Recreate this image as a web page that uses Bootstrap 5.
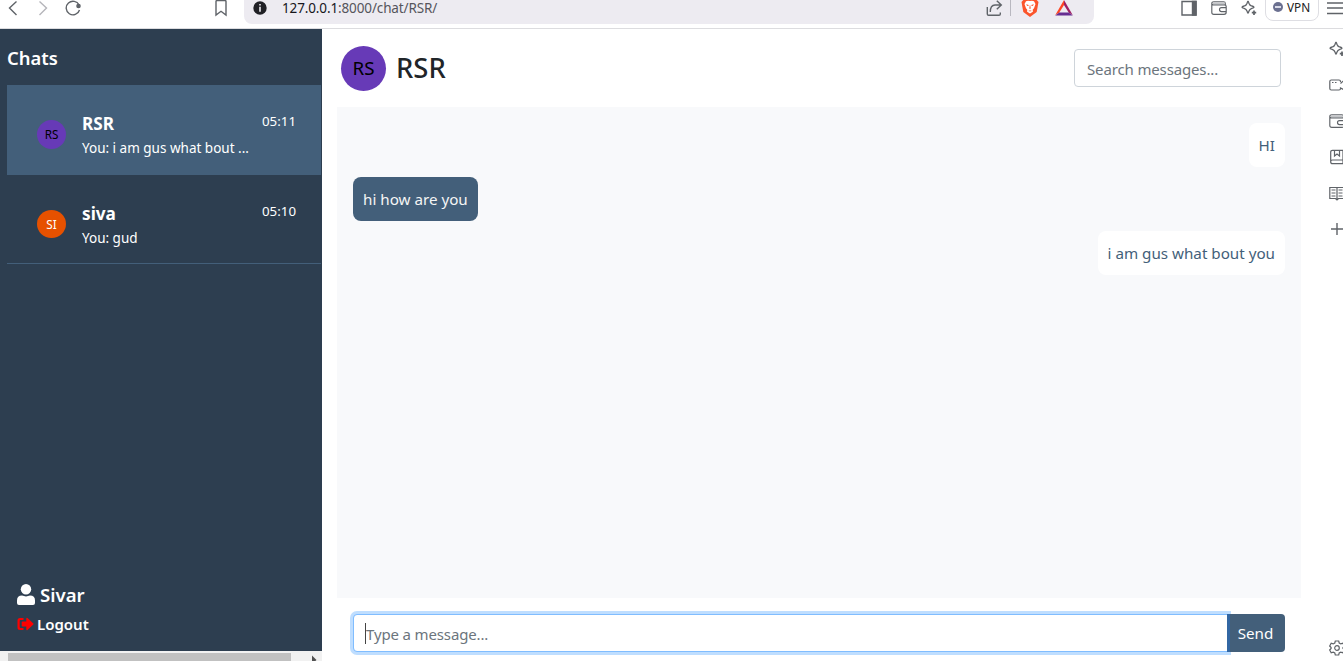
<!DOCTYPE html>
<html lang="en">
<head>
<meta charset="utf-8">
<meta name="viewport" content="width=device-width, initial-scale=1">
<title>Chat</title>
<link href="https://cdn.jsdelivr.net/npm/bootstrap@5.3.0/dist/css/bootstrap.min.css" rel="stylesheet">
<style>
  body { font-family: "Noto Sans", "Open Sans", sans-serif; font-size: 15.2px; line-height: 24px; height: 661px; overflow: hidden; color: #212529; }
  svg { display: block; flex: none; fill: none; stroke: #5f6368; stroke-width: 1.4; }
  .toolbar { height: 29px; border-bottom: 1px solid #dcdcdf; overflow: hidden; }
  .toolbar > svg, .address > svg { margin-top: -2px; }
  .address { width: 850px; height: 24px; background: #edebf1; border-radius: 0 0 8px 8px; margin-left: 15px; }
  .url { font-size: 13.5px; line-height: 18px; margin: -1px 0 0 15px; color: #55555c; width: 690px; letter-spacing: -.13px; }
  .url b { font-weight: 400; color: #17171c; }
  .divider { width: 1px; height: 16px; background: #b9b8c0; margin: 0 10px 0 6px; }
  .vpn { width: 54px; height: 32px; margin: -11px 0 0 8px; padding-top: 4px; border: 1px solid #dedee3; border-radius: 8px; font-size: 11.8px; color: #222; }
  .vpn i { width: 10px; height: 10px; border-radius: 50%; background: #6b7090; margin: 0 4px 0 7px; }
  .vpn i::before { content: ""; display: block; width: 6px; height: 2px; background: #d9dbe8; margin: 4px 2px; }
  .side { width: 322px; background: #2d3e50; color: #fff; }
  .side h1 { font-size: 18.4px; font-weight: 600; line-height: 24px; margin: 17px 0 15px 7px; }
  .chat-item { height: 90px; margin: 0 1px 0 7px; padding: 27px 25px 0 30px; font-size: 13.3px; border-bottom: 1px solid #435f7a; }
  .chat-item.current { background: #435f7a; }
  .chat-item + .chat-item { height: 89px; }
  .chat-item .name { font-size: 17.2px; font-weight: 700; line-height: 24px; }
  .chat-item .preview { font-size: 13.5px; line-height: 20px; margin-top: 2px; }
  .chat-item .time { line-height: 20px; margin-top: -1px; }
  .face { border-radius: 50%; background: #673ab7; color: #000; flex: none; }
  .face-sm { width: 29px; height: 29px; font-size: 11.7px; line-height: 20px; padding-bottom: 1px; margin: 8px 16px 0 0; }
  .face-lg { width: 45px; height: 45px; font-size: 18.8px; }
  .face.orange { background: #e65100; color: #fff; height: 28px; }
  .me { padding: 0 0 13px 17px; }
  .me .who { font-size: 18.6px; font-weight: 600; line-height: 30px; gap: 5px; }
  .me .who svg { margin-top: -2px; }
  .me .out { font-size: 15px; font-weight: 600; line-height: 28px; gap: 3px; }
  .scroller { width: 322px; height: 10px; background: #f1f1f1; }
  .scroller span { width: 283px; height: 8px; background: #c1c1c1; margin: 2px 0 0 8px; }
  .talk { width: 964px; margin-left: 15px; }
  .talk-head { height: 78px; padding: 0 20px 0 4px; }
  .talk-head h2 { font-size: 27.4px; font-weight: 550; color: #212529; line-height: 34px; margin: 0 0 1px 10px; }
  .form-control { font-size: 15px; height: 38px; padding: 7px 12px 5px; color: #495057; border-color: #ced4da; border-radius: 4px; letter-spacing: -.14px; }
  .form-control::placeholder { color: #6c757d; opacity: 1; }
  .search { width: 207px; }
  .messages { height: 491px; background: #f8f9fb; padding: 16px; gap: 10px; }
  .bubble { padding: 10px; border-radius: 8px; background: #fff; color: #435f7a; white-space: nowrap; }
  .bubble.theirs { background: #435f7a; color: #f5f5f5; }
  .composer { padding: 16px 16px 0; }
  .composer .form-control { border-color: #80bdff; box-shadow: 0 0 0 3px #bfdeff; border-radius: 4px 0 0 4px; }
  .caret { position: absolute; left: 13px; top: 9px; width: 1px; height: 21px; background: #444; z-index: 6; }
  .send { width: 58px; height: 38px; background: #435f7a; color: #fff; border: 0; border-left: 3px solid #3267a3; border-radius: 0 4px 4px 0; font-size: 15.2px; padding: 0 4px 0 0; position: relative; z-index: 6; }
  .rail { width: 14px; overflow: hidden; padding-top: 12px; gap: 20px; }
</style>
</head>
<body class="d-flex flex-column bg-white">
<svg width="0" height="0" class="position-absolute" aria-hidden="true">
  <symbol id="sparkle" viewBox="0 0 16 16"><path d="M7 1.200Q7.500 1.200 7.900 3.200Q8.600 5.300 10.800 6Q13 6.600 13 7.200Q13 7.800 10.800 8.400Q8.600 9.100 7.900 11.200Q7.500 13.200 7 13.200Q6.500 13.200 6.100 11.200Q5.400 9.100 3.200 8.400Q1 7.800 1 7.200Q1 6.600 3.200 6Q5.400 5.300 6.100 3.200Q6.500 1.200 7 1.200Z" stroke-width="1.300"/><path d="M13 10.500v4.400M10.800 12.700h4.400" stroke-width="1.700"/></symbol>
  <symbol id="wallet" viewBox="0 0 16 16"><path d="M14.300 4.800V3.400Q14.300 1.700 12.600 1.700H2.800Q.8 1.700 .8 3.500V12.500Q.8 14.300 2.800 14.300H13Q15.200 14.300 15.200 12.300V6.600Q15.200 4.800 13.400 4.800H2.500Q.8 4.800 .8 3.500M15 7.600H10.500a2 2 0 0 0 0 4H15" stroke-width="1.150"/><path d="M2 2.300h11.700v2H2z" fill="#c3c5c8" stroke="none"/></symbol>
</svg>

<header class="toolbar d-flex align-items-start flex-shrink-0">
  <svg width="16" height="20" viewBox="0 0 16 20" class="ms-1"><path d="M12.500 3.500L5.500 10l7 7"/></svg>
  <svg width="16" height="20" viewBox="0 0 16 20" style="margin-left:15px;stroke:#b5b5ba"><path d="M4.500 3.500l7 6.500-7 7"/></svg>
  <svg width="18" height="20" viewBox="0 0 18 20" style="margin-left:13px"><path d="M15.100 7A6.800 6.800 0 1 0 15.500 12"/><circle cx="14.500" cy="8" r="1.600" fill="#5f6368"/></svg>
  <svg width="16" height="20" viewBox="0 0 16 20" style="margin-left:131px"><path d="M3 17V3.500Q3 2.500 4 2.500h8q1 0 1 1V17l-5-3.700z"/></svg>
  <div class="address d-flex align-items-start">
    <svg width="14" height="20" viewBox="0 0 14 20" style="margin-left:9px;stroke:none"><circle cx="7" cy="10" r="6.700" fill="#202025"/><path d="M6.200 6h1.600v1.600H6.200zM6.200 8.800h1.600v5H6.200z" fill="#edebf1"/></svg>
    <span class="url"><b>127.0.0.1</b>:8000/chat/RSR/</span>
    <svg width="20" height="20" viewBox="0 0 20 20" style="margin-left:12px"><path d="M3.300 9V16Q3.300 17.300 4.600 17.300H15Q16.300 17.300 16.300 16V14.500M6.300 14Q6.300 7 11 7H17M12.800 2.700L17.300 7l-4.500 4.300"/></svg>
    <span class="divider"></span>
    <svg width="18" height="20" viewBox="0 0 18 20" style="stroke:none"><path fill="#fb542b" d="M4 0h10l3.500 4-1.800 10L9 19 2.300 14 .5 4z"/><path fill="#fff" d="M5 3.300l2-.6 2 .4 2-.4 2 .6 1.500 2.700-1.500 4.200-1.300 1.500.2 2L9 15.500l-2.900-1.800.2-2L5 10.200 3.500 6z"/><path fill="#fb542b" d="M5.200 6.200l2.500.7-.4 1.100-1.300-.3zM12.800 6.200l-2.500.7.4 1.100 1.300-.3zM8.600 7.500h.8v2.300h-.8zM7.800 9.700h2.400L9 11zM7.700 12.500h2.600v.8H7.700z"/></svg>
    <svg width="18" height="20" viewBox="0 0 18 20" style="margin-left:16px;stroke:none"><path fill="#ff4724" d="M9 2v5L4.300 14.500.2 17.300z"/><path fill="#9e1f63" d="M9 2l8.800 15.300-4.100-2.800L9 7z"/><path fill="#662d91" d="M.2 17.500l4.100-3h9.400l4.100 3z"/></svg>
  </div>
  <svg width="16" height="20" viewBox="0 0 16 20" style="margin-left:87px"><path d="M1 3.500h14V17H1z"/><path d="M11.500 3.500H15V17h-3.500z" fill="#5f6368"/></svg>
  <svg width="16" height="20" style="margin-left:14px"><use href="#wallet" y="2" width="16" height="16"/></svg>
  <svg width="16" height="20" style="margin-left:14px"><use href="#sparkle" y="2" width="16" height="16"/></svg>
  <div class="vpn d-flex align-items-center"><i></i>VPN</div>
  <svg width="16" height="20" viewBox="0 0 16 20" style="margin-left:8px"><path d="M0 5h16M0 10h16M0 15.500h16"/></svg>
</header>

<div class="d-flex flex-grow-1">
  <div class="d-flex flex-column flex-shrink-0">
    <aside class="side d-flex flex-column flex-grow-1">
      <h1>Chats</h1>
      <div class="chat-item current d-flex">
        <div class="face face-sm d-flex align-items-center justify-content-center">RS</div>
        <div class="flex-grow-1"><div class="name">RSR</div><div class="preview">You: i am gus what bout ...</div></div>
        <div class="time">05:11</div>
      </div>
      <div class="chat-item d-flex">
        <div class="face face-sm orange d-flex align-items-center justify-content-center">SI</div>
        <div class="flex-grow-1"><div class="name">siva</div><div class="preview">You: gud</div></div>
        <div class="time">05:10</div>
      </div>
      <div class="me mt-auto">
        <div class="who d-flex align-items-center"><svg width="18" height="21" viewBox="0 0 18 21" style="fill:#fff;stroke:none"><circle cx="9" cy="5.300" r="5.200"/><path d="M0 19V16.500Q0 11.600 5 11.600Q9 13.200 13 11.600Q18 11.600 18 16.500V19Q18 21 16 21H2Q0 21 0 19Z"/></svg>Sivar</div>
        <div class="out d-flex align-items-center"><svg width="17" height="14" viewBox="0 0 17 14" style="fill:#f00;stroke:none"><path d="M6.500 1v2H3.500Q2.700 3 2.700 3.800V10Q2.700 11 3.500 11H6.500V13H3Q.5 13 .5 10.500V3.500Q.5 1 3 1zM16.300 7.600L10.500 13Q9.300 13.700 9.300 12.300V9.500H5.500Q4.700 9.500 4.700 8.700V5.300Q4.700 4.500 5.500 4.500H9.300V1.700Q9.300.3 10.500 1L16.300 6.400Q16.900 7 16.300 7.600Z"/></svg>Logout</div>
      </div>
    </aside>
    <div class="scroller d-flex"><span></span><svg width="6" height="10" viewBox="0 0 6 10" style="margin-left:20px;fill:#505050;stroke:none"><path d="M1 4.500L5.500 9 1 13z"/></svg></div>
  </div>

  <main class="talk flex-shrink-0">
    <div class="talk-head d-flex align-items-center justify-content-between">
      <div class="d-flex align-items-center">
        <div class="face face-lg d-flex align-items-center justify-content-center">RS</div>
        <h2>RSR</h2>
      </div>
      <input class="form-control search" type="text" placeholder="Search messages...">
    </div>
    <div class="messages d-flex flex-column align-items-end">
      <div class="bubble">HI</div>
      <div class="bubble theirs align-self-start">hi how are you</div>
      <div class="bubble">i am gus what bout you</div>
    </div>
    <div class="composer">
      <div class="input-group position-relative flex-nowrap">
        <input class="form-control" type="text" placeholder="Type a message...">
        <span class="caret"></span>
        <button class="send" type="button">Send</button>
      </div>
    </div>
  </main>

  <div class="rail d-flex flex-column ms-auto">
    <svg width="16" height="16"><use href="#sparkle"/></svg>
    <svg width="16" height="16" viewBox="0 0 16 16"><path d="M11.500 5V4.500Q11.500 3 10 3H2.300Q.8 3 .8 4.500v7Q.8 13 2.300 13H10q1.500 0 1.500-1.500V11l4 2V3l-4 3.500M3 5.500h1.500M6 5.500h1.500" stroke-width="1.200"/></svg>
    <svg width="16" height="16"><use href="#wallet"/></svg>
    <svg width="16" height="16" viewBox="0 0 16 16"><path d="M14 14.700H3.500Q1.700 14.700 1.700 13V3Q1.700 1.300 3.500 1.300H14zM1.700 12.500Q1.700 11 3.500 11H14M5.500 1.500V7L8 5l2.500 2V1.500" stroke-width="1.200"/></svg>
    <svg width="16" height="16" viewBox="0 0 16 16"><path d="M8 2.500H.8v11H6.500L8 15l1.500-1.500h6v-11H8V14M2.500 5h4M2.500 8h4M2.500 11h4M9.500 5h4M9.500 8h4M9.500 11h4" stroke-width="1.200"/></svg>
    <svg width="16" height="16" viewBox="0 0 16 16"><path d="M8 2v12M2 8h12"/></svg>
    <svg width="16" height="16" viewBox="0 0 16 16" class="mt-auto" style="margin-bottom:5px"><circle cx="8" cy="8" r="2.300" stroke-width="1.200"/><path d="M6.300 1h3.400l.5 2 1.600.9 2-.6L15.500 6l-1.500 1.500v1L15.500 10l-1.700 2.700-2-.6-1.600.9-.5 2H6.300l-.5-2-1.600-.9-2 .6L.7 10l1.400-1.500v-1L.7 6l1.500-2.700 2 .6L5.800 3z" stroke-width="1.200"/></svg>
  </div>
</div>
<script src="https://cdn.jsdelivr.net/npm/bootstrap@5.3.0/dist/js/bootstrap.bundle.min.js"></script>
</body>
</html>
